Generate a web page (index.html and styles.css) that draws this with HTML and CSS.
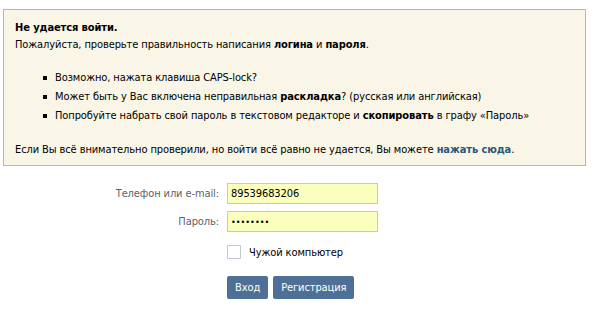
FILE: index.html
```html
<!DOCTYPE html>
<html lang="ru">
<head>
<meta charset="UTF-8">
<title>Вход</title>
<link rel="stylesheet" href="styles.css">
</head>
<body>
    <div class="page">
        <div class="msg">
            <div class="msg-title">Не удается войти.</div>
            <div>Пожалуйста, проверьте правильность написания <b>логина</b> и <b>пароля</b>.</div>
            <ul class="hints">
                <li>Возможно, нажата клавиша CAPS-lock?</li>
                <li>Может быть у Вас включена неправильная <b>раскладка</b>? (русская или английская)</li>
                <li>Попробуйте набрать свой пароль в текстовом редакторе и <b>скопировать</b> в графу «Пароль»</li>
            </ul>
            <div>Если Вы всё внимательно проверили, но войти всё равно не удается, Вы можете <a href="#" class="link">нажать сюда</a>.</div>
        </div>

        <form class="login">
            <label for="email">Телефон или e-mail:</label>
            <input type="text" id="email" class="field" value="89539683206">
            <label for="pass">Пароль:</label>
            <input type="password" id="pass" class="field pass" value="12345678">
            <div class="check-row">
                <span class="checkbox"></span>
                <span>Чужой компьютер</span>
            </div>
            <div class="buttons">
                <button type="submit" class="btn">Вход</button>
                <button type="button" class="btn">Регистрация</button>
            </div>
        </form>
    </div>
</body>
</html>
```

FILE: styles.css
```css
body {
    margin: 0;
    background: #fff;
    font-family: 'DejaVu Sans Condensed', 'DejaVu Sans', sans-serif;
    font-size: 11px;
    letter-spacing: -0.1px;
    color: #000;
}

.page {
    padding: 9px 12px 0 3px;
}

.msg {
    background-color: #f9f6e7;
    border: 1px solid #d4bc4c;
    padding: 9px 11px 7px;
    line-height: 17px;
}

.msg-title {
    font-weight: bold;
}

.hints {
    list-style: none;
    margin: 15px 0 16px;
    padding: 0 0 0 40px;
}

.hints li {
    position: relative;
    line-height: 19px;
}

.hints li::before {
    content: "";
    position: absolute;
    left: -12px;
    top: 8px;
    width: 4px;
    height: 4px;
    background: #000;
}

.link {
    color: #2b587a;
    font-weight: bold;
    text-decoration: none;
}

.login {
    display: grid;
    grid-template-columns: 216px 151px;
    column-gap: 8px;
    row-gap: 7px;
    margin-top: 17px;
    align-items: center;
}

.login label {
    text-align: right;
    color: #5c6168;
}

.field {
    box-sizing: border-box;
    width: 151px;
    height: 21px;
    margin: 0;
    padding: 0 3px;
    border: 1px solid #c0cad5;
    background: #faffbd;
    font-family: inherit;
    font-size: 11px;
    letter-spacing: -0.1px;
    color: #000;
    outline: none;
}

.pass {
    font-size: 9px;
    letter-spacing: 0;
}

.check-row {
    grid-column: 2 / span 1;
    display: flex;
    align-items: center;
    gap: 8px;
    margin-top: 6px;
    white-space: nowrap;
}

.checkbox {
    box-sizing: border-box;
    width: 14px;
    height: 14px;
    border: 1px solid #c0cad5;
    background: #fff;
}

.buttons {
    grid-column: 2 / span 1;
    display: flex;
    gap: 5px;
    margin-top: 10px;
}

.btn {
    height: 23px;
    padding: 0 8px;
    border: none;
    border-radius: 2px;
    background-color: #4e7096;
    color: #fff;
    font-family: inherit;
    font-size: 11px;
    letter-spacing: -0.1px;
    cursor: pointer;
}
```
